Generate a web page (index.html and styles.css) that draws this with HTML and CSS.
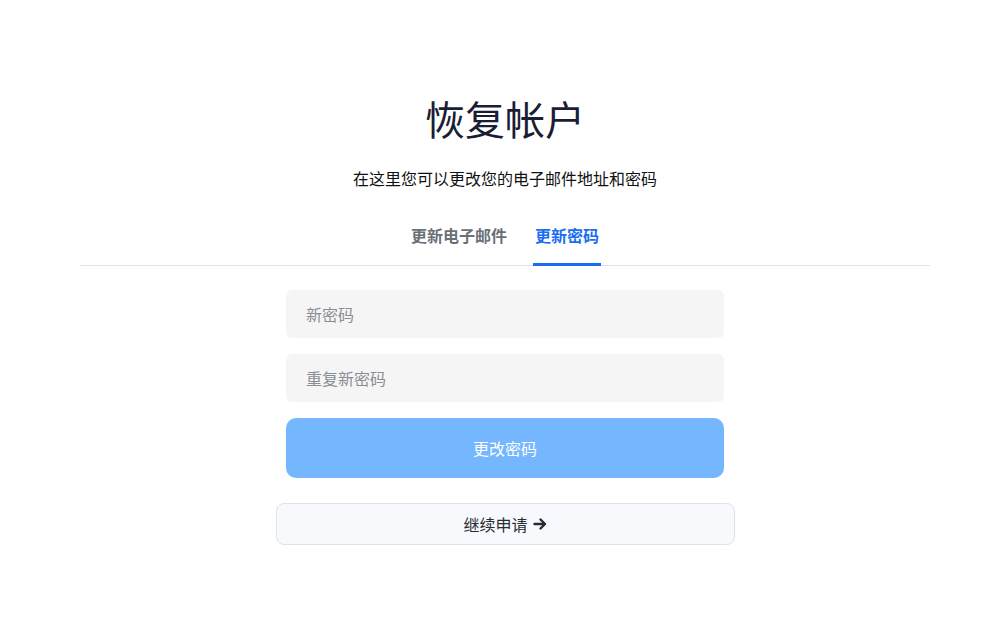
FILE: index.html
```html
<!DOCTYPE html>
<html lang="zh-CN">

<head>
    <meta charset="UTF-8">
    <meta name="viewport" content="width=device-width, initial-scale=1.0">
    <title>恢复帐户</title>

    <link rel="stylesheet" href="styles.css">
</head>

<body>
    <div id="conta">
        <h1 class="titulo">恢复帐户</h1>
        <p class="subtitulo">在这里您可以更改您的电子邮件地址和密码</p>

        <div class="abas">
            <div class="aba">更新电子邮件</div>
            <div class="aba ativa">更新密码</div>
        </div>

        <form class="formulario">
            <input class="campo" type="password" placeholder="新密码">
            <input class="campo" type="password" placeholder="重复新密码">
            <button class="btn btn-principal" type="button">更改密码</button>
        </form>

        <button class="btn btn-continuar" type="button">继续申请
            <svg width="14" height="14" viewBox="0 0 14 14" fill="none" stroke="currentColor" stroke-width="2.4"
                stroke-linecap="round" stroke-linejoin="round">
                <path d="M1.5 7h10.5M7.5 2.5 12 7l-4.5 4.5" />
            </svg>
        </button>
    </div>
</body>

</html>
```

FILE: styles.css
```css
body {
    margin: 0;
    background-color: #fff;
    font-family: "Noto Sans CJK SC", "Noto Sans", sans-serif;
    color: #1c1f2e;
}

#conta {
    width: 850px;
    margin-left: 80px;
    padding-top: 88px;
    display: flex;
    flex-direction: column;
    align-items: center;
}

.titulo {
    margin: 0;
    font-size: 40px;
    font-weight: 400;
    line-height: 60px;
    color: #1a1d33;
}

.subtitulo {
    margin: 18px 0 0;
    font-size: 16px;
    line-height: 24px;
    color: #111;
}

.abas {
    align-self: stretch;
    display: flex;
    justify-content: center;
    gap: 24px;
    margin-top: 20px;
    border-bottom: 1px solid #e1e1e8;
}

.aba {
    font-size: 16px;
    font-weight: 700;
    color: #6b6f78;
    padding: 14px 2px 17px;
    border-bottom: 3px solid transparent;
    margin-bottom: -1px;
    line-height: 22px;
}

.aba.ativa {
    color: #1a6ef0;
    border-bottom-color: #1a6ef0;
}

.formulario {
    width: 438px;
    margin-top: 24px;
    display: flex;
    flex-direction: column;
    gap: 16px;
}

.campo {
    height: 48px;
    border: none;
    border-radius: 6px;
    background-color: #f5f5f5;
    padding: 0 20px;
    font-family: inherit;
    font-size: 16px;
    color: #333;
    outline: none;
}

.campo::placeholder {
    color: #8a8d94;
}

.btn {
    font-family: inherit;
    font-size: 16px;
    cursor: pointer;
    display: flex;
    align-items: center;
    justify-content: center;
    gap: 5px;
}

.btn-principal {
    height: 60px;
    border: none;
    border-radius: 10px;
    background-color: #74b7ff;
    color: #fff;
}

.btn-continuar {
    width: 459px;
    height: 42px;
    margin-top: 25px;
    border: 1px solid #dfe1e8;
    border-radius: 8px;
    background-color: #f8f9fc;
    color: #2a2c35;
}
```
